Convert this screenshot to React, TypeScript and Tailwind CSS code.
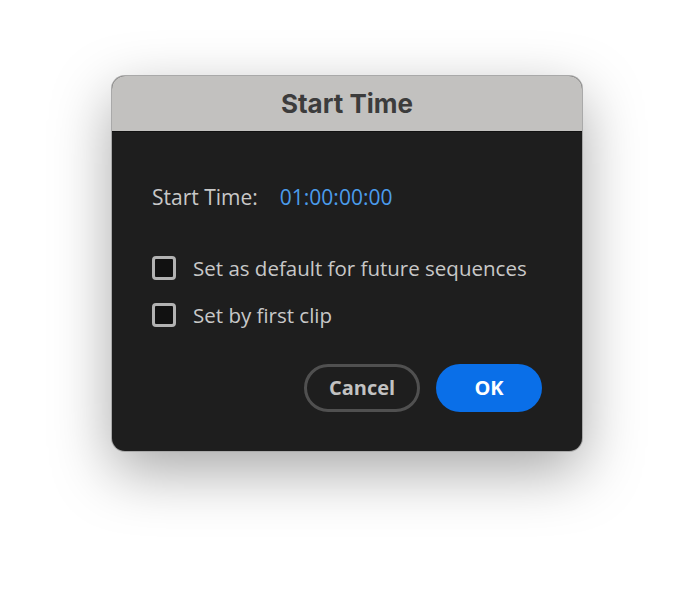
export default function App() {
  return (
    <div className="flex h-[600px] w-[694px] items-start justify-center bg-white pt-[76px]">
      <div className="w-[470px] overflow-hidden rounded-[13px] bg-[#1e1e1e] shadow-[0_20px_60px_rgba(0,0,0,0.35)] ring-1 ring-[#a9a9a9]">
        <div className="flex h-[56px] items-center justify-center border-b border-[#111] bg-[#c2c1bf]">
          <span className="font-['Inter',sans-serif] text-[26px] font-bold text-[#3c3c3c]">Start Time</span>
        </div>
        <div className="px-[40px] pt-[51px] pb-[39px] font-['Open_Sans',sans-serif]">
          <div className="flex items-center text-[21px] leading-[28px]">
            <span className="text-[#c8c8c8]">Start Time:</span>
            <span className="ml-[22px] text-[#4b9cec]">01:00:00:00</span>
          </div>
          <div className="mt-[43px] flex flex-col gap-[19px]">
            <label className="flex h-[28px] items-center">
              <span className="h-[24px] w-[24px] rounded-[4px] border-[3px] border-[#b2b2b2] bg-[#111]" />
              <span className="ml-[17px] text-[20.5px] leading-[28px] text-[#c8c8c8]">Set as default for future sequences</span>
            </label>
            <label className="flex h-[28px] items-center">
              <span className="h-[24px] w-[24px] rounded-[4px] border-[3px] border-[#b2b2b2] bg-[#111]" />
              <span className="ml-[17px] text-[20.5px] leading-[28px] text-[#c8c8c8]">Set by first clip</span>
            </label>
          </div>
          <div className="mt-[35px] flex justify-end gap-[16px]">
            <button className="h-[48px] w-[116px] rounded-full border-[3px] border-[#505050] text-[20px] font-bold text-[#c2c2c2]">Cancel</button>
            <button className="h-[48px] w-[106px] rounded-full bg-[#0a6fe8] text-[20px] font-bold text-white">OK</button>
          </div>
        </div>
      </div>
    </div>
  );
}
